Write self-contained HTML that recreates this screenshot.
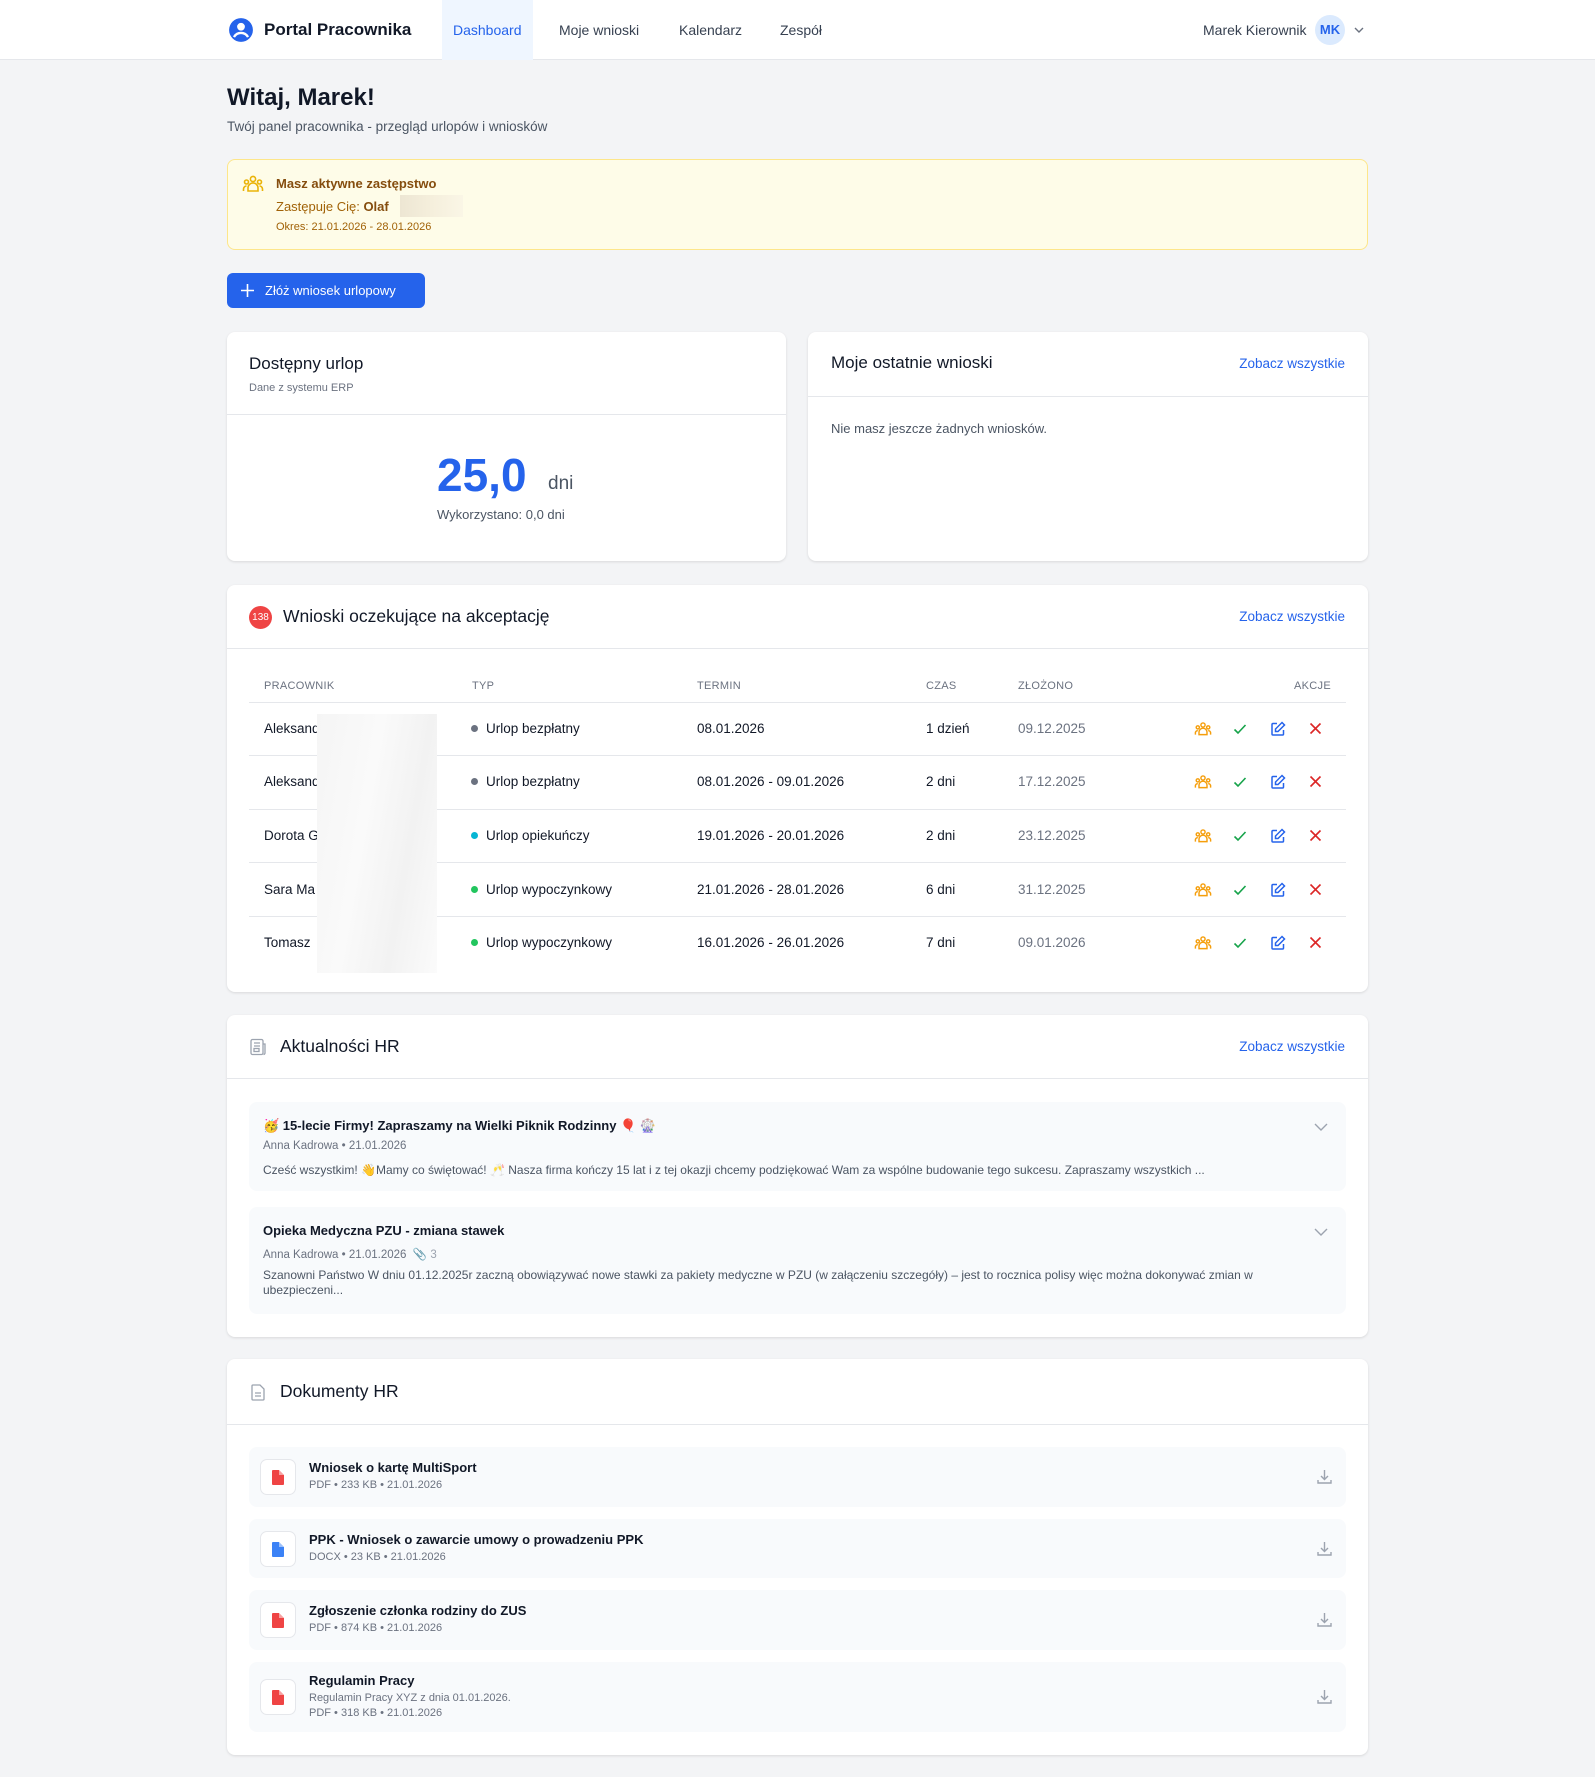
<!DOCTYPE html>
<html><head><meta charset="utf-8">
<style>
*{box-sizing:border-box;margin:0;padding:0}
body{width:1595px;height:1777px;background:#f3f4f6;font-family:"Liberation Sans","Noto Sans CJK JP",sans-serif;color:#111827;position:relative;overflow:hidden}
.a{position:absolute}
.card{position:absolute;background:#fff;border-radius:8px;box-shadow:0 1px 3px rgba(0,0,0,.08),0 1px 2px rgba(0,0,0,.04)}
.hd{position:absolute;left:0;right:0;border-bottom:1px solid #e5e7eb}
.t{position:absolute;white-space:nowrap}
.link{color:#2563eb;font-size:13.5px}
.th{font-size:11px;color:#6b7280;letter-spacing:.3px}
.td{font-size:13.5px;color:#111827}
.row{position:absolute;left:22px;right:22px;border-top:1px solid #e5e7eb}
.dot{display:inline-block;width:7px;height:7px;border-radius:50%;margin-right:8px;vertical-align:1px}
.item{position:absolute;left:22px;right:22px;background:#f8fafc;border-radius:8px}
.fi{position:absolute;left:11px;width:36px;height:36px;background:#fff;border:1px solid #e5e7eb;border-radius:7px}
</style></head><body>
<div class="a" style="left:0;top:0;width:1595px;height:60px;background:#fff;border-bottom:1px solid #e5e7eb"></div>
<svg class="a" style="left:228px;top:17px" width="26" height="26" viewBox="0 0 24 24"><circle cx="12" cy="12" r="11" fill="#2563eb"/><circle cx="12" cy="9" r="3.6" fill="#fff"/><path d="M5.5 18.5c1.5-2.6 3.8-3.8 6.5-3.8s5 1.2 6.5 3.8" stroke="#fff" stroke-width="2.2" fill="none"/></svg>
<div class="t" style="left:264px;top:20px;font-size:17px;font-weight:bold;color:#111827">Portal Pracownika</div>
<div class="a" style="left:442px;top:0;width:91px;height:60px;background:#eff6ff"></div>
<div class="t" style="left:453px;top:22px;font-size:14px;color:#2563eb">Dashboard</div>
<div class="t" style="left:559px;top:22px;font-size:14px;color:#374151">Moje wnioski</div>
<div class="t" style="left:679px;top:22px;font-size:14px;color:#374151">Kalendarz</div>
<div class="t" style="left:780px;top:22px;font-size:14px;color:#374151">Zespół</div>
<div class="t" style="left:1203px;top:22px;font-size:14px;color:#374151">Marek Kierownik</div>
<div class="a" style="left:1315px;top:15px;width:30px;height:30px;border-radius:50%;background:#dbeafe;color:#2563eb;font-size:13px;font-weight:bold;text-align:center;line-height:30px">MK</div>
<svg class="a" style="left:1353px;top:24px" width="12" height="12" viewBox="0 0 12 12"><path d="M2 4l4 4 4-4" stroke="#6b7280" stroke-width="1.4" fill="none"/></svg>

<div class="t" style="left:227px;top:84px;font-size:24px;font-weight:bold">Witaj, Marek!</div>
<div class="t" style="left:227px;top:119px;font-size:13.5px;color:#4b5563">Twój panel pracownika - przegląd urlopów i wniosków</div>

<div class="a" style="left:227px;top:159px;width:1141px;height:91px;background:#fefce8;border:1px solid #fde68a;border-radius:8px"></div>
<svg class="a" style="left:242px;top:174px" width="22" height="20" viewBox="0 0 22 20" fill="none" stroke="#eab308" stroke-width="1.6"><circle cx="11" cy="5" r="2.6"/><circle cx="4.5" cy="8" r="2"/><circle cx="17.5" cy="8" r="2"/><path d="M6 17v-3a5 5 0 0110 0v3z"/><path d="M1.5 17v-2a3 3 0 013-3M20.5 17v-2a3 3 0 00-3-3"/></svg>
<div class="t" style="left:276px;top:176px;font-size:13px;font-weight:bold;color:#854d0e">Masz aktywne zastępstwo</div>
<div class="t" style="left:276px;top:199px;font-size:13px;color:#a16207">Zastępuje Cię: <b style="color:#854d0e">Olaf</b></div>
<div class="a" style="left:400px;top:195px;width:63px;height:22px;background:linear-gradient(90deg,#ede6d3,#f5efdc,#faf6e6)"></div>
<div class="t" style="left:276px;top:221px;font-size:11px;color:#a16207">Okres: 21.01.2026 - 28.01.2026</div>

<div class="a" style="left:227px;top:273px;width:198px;height:35px;background:#2563eb;border-radius:6px"></div>
<svg class="a" style="left:240px;top:283px" width="15" height="15" viewBox="0 0 15 15"><path d="M7.5 1v13M1 7.5h13" stroke="#fff" stroke-width="1.6"/></svg>
<div class="t" style="left:265px;top:283px;font-size:13px;color:#fff">Złóż wniosek urlopowy</div>

<div class="card" style="left:227px;top:332px;width:559px;height:229px">
<div class="t" style="left:22px;top:22px;font-size:17px">Dostępny urlop</div>
<div class="t" style="left:22px;top:50px;font-size:11px;color:#6b7280">Dane z systemu ERP</div>
<div class="hd" style="top:82px"></div>
<div class="t" style="left:210px;top:116px;font-size:46px;font-weight:bold;color:#2563eb">25,0</div>
<div class="t" style="left:321px;top:141px;font-size:19px;color:#4b5563">dni</div>
<div class="t" style="left:210px;top:175px;font-size:13px;color:#4b5563">Wykorzystano: 0,0 dni</div>
</div>
<div class="card" style="left:808px;top:332px;width:560px;height:229px">
<div class="t" style="left:23px;top:21px;font-size:17px">Moje ostatnie wnioski</div>
<div class="t link" style="right:23px;top:24px">Zobacz wszystkie</div>
<div class="hd" style="top:64px"></div>
<div class="t" style="left:23px;top:89px;font-size:13px;color:#4b5563">Nie masz jeszcze żadnych wniosków.</div>
</div>

<div class="card" style="left:227px;top:585px;width:1141px;height:407px">
<div class="a" style="left:22px;top:21px;width:23px;height:23px;border-radius:50%;background:#ef4444;color:#fff;font-size:10px;text-align:center;line-height:23px">138</div>
<div class="t" style="left:56px;top:21px;font-size:17.5px">Wnioski oczekujące na akceptację</div>
<div class="t link" style="right:23px;top:24px">Zobacz wszystkie</div>
<div class="hd" style="top:63px"></div>
<div class="t th" style="left:37px;top:95px">PRACOWNIK</div>
<div class="t th" style="left:245px;top:95px">TYP</div>
<div class="t th" style="left:470px;top:95px">TERMIN</div>
<div class="t th" style="left:699px;top:95px">CZAS</div>
<div class="t th" style="left:791px;top:95px">ZŁOŻONO</div>
<div class="t th" style="right:37px;top:95px">AKCJE</div>
<div class="row" style="top:117px"></div>
<div class="row" style="top:170px"></div>
<div class="row" style="top:224px"></div>
<div class="row" style="top:277px"></div>
<div class="row" style="top:331px"></div>
</div>
<div id="rows"></div>
<div class="a" style="left:317px;top:714px;width:120px;height:259px;background:linear-gradient(100deg,#f5f5f5,#fafafa 40%,#f2f2f2 70%,#fbfbfb)"></div>

<div class="card" style="left:227px;top:1015px;width:1141px;height:322px">
<svg class="a" style="left:23px;top:23px" width="16" height="18" viewBox="0 0 16 18" fill="none" stroke="#9ca3af" stroke-width="1.3"><rect x="1" y="1.5" width="12" height="15" rx="1.5"/><path d="M4 5h6M4 8h6"/><rect x="4" y="10.5" width="5" height="3"/><path d="M13 6h2v9a1.5 1.5 0 01-1.5 1.5"/></svg>
<div class="t" style="left:53px;top:21px;font-size:17.5px">Aktualności HR</div>
<div class="t link" style="right:23px;top:24px">Zobacz wszystkie</div>
<div class="hd" style="top:63px"></div>
<div class="item" style="top:87px;height:89px">
<div class="t" style="left:14px;top:16px;font-size:13px;font-weight:bold">🥳 15-lecie Firmy! Zapraszamy na Wielki Piknik Rodzinny 🎈 🎡</div>
<svg class="a" style="right:18px;top:20px" width="14" height="10" viewBox="0 0 14 10"><path d="M1 2l6 6 6-6" stroke="#9ca3af" stroke-width="1.4" fill="none"/></svg>
<div class="t" style="left:14px;top:38px;font-size:11.5px;color:#6b7280">Anna Kadrowa • 21.01.2026</div>
<div class="t" style="left:14px;top:61px;font-size:12px;color:#4b5563">Cześć wszystkim! 👋Mamy co świętować! 🥂 Nasza firma kończy 15 lat i z tej okazji chcemy podziękować Wam za wspólne budowanie tego sukcesu. Zapraszamy wszystkich ...</div>
</div>
<div class="item" style="top:192px;height:107px">
<div class="t" style="left:14px;top:16px;font-size:13px;font-weight:bold">Opieka Medyczna PZU - zmiana stawek</div>
<svg class="a" style="right:18px;top:20px" width="14" height="10" viewBox="0 0 14 10"><path d="M1 2l6 6 6-6" stroke="#9ca3af" stroke-width="1.4" fill="none"/></svg>
<div class="t" style="left:14px;top:40px;font-size:11.5px;color:#6b7280">Anna Kadrowa • 21.01.2026 <span style="color:#9ca3af">&nbsp;📎 3</span></div>
<div class="a" style="left:14px;top:61px;width:1040px;font-size:12px;line-height:15px;color:#4b5563">Szanowni Państwo W dniu 01.12.2025r zaczną obowiązywać nowe stawki za pakiety medyczne w PZU (w załączeniu szczegóły) – jest to rocznica polisy więc można dokonywać zmian w ubezpieczeni...</div>
</div>
</div>

<div class="card" style="left:227px;top:1359px;width:1141px;height:396px">
<svg class="a" style="left:24px;top:25px" width="14" height="17" viewBox="0 0 14 17" fill="none" stroke="#9ca3af" stroke-width="1.3"><path d="M2 1h7l4 4v10a1 1 0 01-1 1H2a1 1 0 01-1-1V2a1 1 0 011-1z"/><path d="M4 9h6M4 12h6"/></svg>
<div class="t" style="left:53px;top:22px;font-size:17.5px">Dokumenty HR</div>
<div class="hd" style="top:65px"></div>
</div>
<div id="docs"></div>
<script>
var R=[["Aleksand","#6b7280","Urlop bezpłatny","08.01.2026","1 dzień","09.12.2025"],
["Aleksand","#6b7280","Urlop bezpłatny","08.01.2026 - 09.01.2026","2 dni","17.12.2025"],
["Dorota G","#06b6d4","Urlop opiekuńczy","19.01.2026 - 20.01.2026","2 dni","23.12.2025"],
["Sara Ma","#22c55e","Urlop wypoczynkowy","21.01.2026 - 28.01.2026","6 dni","31.12.2025"],
["Tomasz","#22c55e","Urlop wypoczynkowy","16.01.2026 - 26.01.2026","7 dni","09.01.2026"]];
var cy=[729,782,836,890,943],h="";
R.forEach(function(r,i){var y=cy[i]-8;
h+='<div class="t td" style="left:264px;top:'+y+'px">'+r[0]+'</div>'+
'<div class="t td" style="left:471px;top:'+y+'px"><span class="dot" style="background:'+r[1]+'"></span>'+r[2]+'</div>'+
'<div class="t td" style="left:697px;top:'+y+'px">'+r[3]+'</div>'+
'<div class="t td" style="left:926px;top:'+y+'px">'+r[4]+'</div>'+
'<div class="t td" style="left:1018px;top:'+y+'px;color:#6b7280">'+r[5]+'</div>'+
'<svg class="a" style="left:1194px;top:'+(cy[i]-8)+'px" width="18" height="16" viewBox="0 0 22 20" fill="none" stroke="#f59e0b" stroke-width="1.8"><circle cx="11" cy="5" r="2.6"/><circle cx="4.5" cy="8" r="2"/><circle cx="17.5" cy="8" r="2"/><path d="M6 17v-3a5 5 0 0110 0v3z"/><path d="M1.5 17v-2a3 3 0 013-3M20.5 17v-2a3 3 0 00-3-3"/></svg>'+
'<svg class="a" style="left:1233px;top:'+(cy[i]-7)+'px" width="14" height="14" viewBox="0 0 14 14"><path d="M1.5 7.5l3.5 3.5 7.5-8" stroke="#16a34a" stroke-width="1.6" fill="none"/></svg>'+
'<svg class="a" style="left:1270px;top:'+(cy[i]-8)+'px" width="16" height="16" viewBox="0 0 16 16" fill="none" stroke="#2563eb" stroke-width="1.5"><path d="M7 2.5H3a1 1 0 00-1 1V13a1 1 0 001 1h9.5a1 1 0 001-1V9"/><path d="M12 1.5l2.5 2.5L8 10.5H5.5V8z"/></svg>'+
'<svg class="a" style="left:1309px;top:'+(cy[i]-7)+'px" width="13" height="13" viewBox="0 0 13 13"><path d="M1.5 1.5l10 10M11.5 1.5l-10 10" stroke="#dc2626" stroke-width="1.6"/></svg>';});
document.getElementById('rows').innerHTML=h;
var D=[[1447,60,"Wniosek o kartę MultiSport","PDF • 233 KB • 21.01.2026","","#ef4444"],
[1519,59,"PPK - Wniosek o zawarcie umowy o prowadzeniu PPK","DOCX • 23 KB • 21.01.2026","","#3b82f6"],
[1590,60,"Zgłoszenie członka rodziny do ZUS","PDF • 874 KB • 21.01.2026","","#ef4444"],
[1662,70,"Regulamin Pracy","PDF • 318 KB • 21.01.2026","Regulamin Pracy XYZ z dnia 01.01.2026.","#ef4444"]];
h="";
D.forEach(function(d){var top=d[0],ht=d[1];
h+='<div class="a" style="left:249px;top:'+top+'px;width:1097px;height:'+ht+'px;background:#f8fafc;border-radius:8px">'+
'<div class="fi" style="top:'+(ht/2-18)+'px"><svg style="position:absolute;left:11px;top:10px" width="12" height="15" viewBox="0 0 12 15"><path d="M0 1a1 1 0 011-1h6l5 5v9a1 1 0 01-1 1H1a1 1 0 01-1-1z" fill="'+d[5]+'"/><path d="M7 0v5h5" fill="#fff" opacity=".5"/></svg></div>'+
(d[4]?'<div class="t" style="left:60px;top:11px;font-size:13px;font-weight:bold;color:#111827">'+d[2]+'</div><div class="t" style="left:60px;top:30px;font-size:11px;color:#6b7280">'+d[4]+'</div><div class="t" style="left:60px;top:45px;font-size:11px;color:#6b7280">'+d[3]+'</div>'
:'<div class="t" style="left:60px;top:'+(ht/2-17)+'px;font-size:13px;font-weight:bold;color:#111827">'+d[2]+'</div><div class="t" style="left:60px;top:'+(ht/2+2)+'px;font-size:11px;color:#6b7280">'+d[3]+'</div>')+
'<svg class="a" style="right:14px;top:'+(ht/2-8)+'px" width="15" height="16" viewBox="0 0 15 16" fill="none" stroke="#9ca3af" stroke-width="1.4"><path d="M7.5 1v9M4 7l3.5 3.5L11 7M1 11v3h13v-3"/></svg></div>';});
document.getElementById('docs').innerHTML=h;
</script>
</body></html>
